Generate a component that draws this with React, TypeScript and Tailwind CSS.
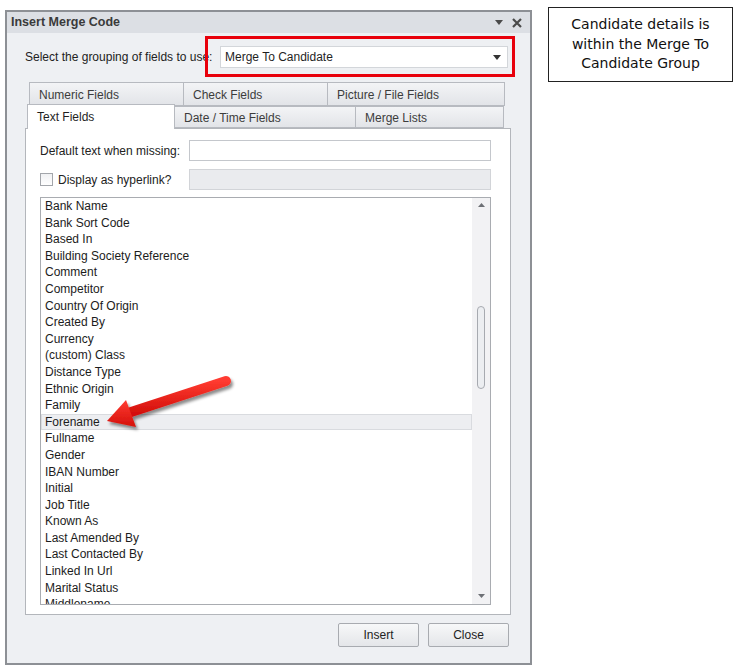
import React from 'react';

const fields = [
  'Bank Name',
  'Bank Sort Code',
  'Based In',
  'Building Society Reference',
  'Comment',
  'Competitor',
  'Country Of Origin',
  'Created By',
  'Currency',
  '(custom) Class',
  'Distance Type',
  'Ethnic Origin',
  'Family',
  'Forename',
  'Fullname',
  'Gender',
  'IBAN Number',
  'Initial',
  'Job Title',
  'Known As',
  'Last Amended By',
  'Last Contacted By',
  'Linked In Url',
  'Marital Status',
  'Middlename',
];

function Tab({ label, width, active }: { label: string; width: string; active?: boolean }) {
  return (
    <div
      className={`${width} shrink-0 flex items-center pl-[9px] border border-[#b7bac0] -ml-px first:ml-0 ${
        active
          ? 'bg-white border-b-0 h-[25px] -mb-px relative z-10 text-[#1f1f1f]'
          : 'h-full pt-[2px] bg-gradient-to-b from-[#f3f4f6] to-[#e2e4e8] text-[#3c3c3c]'
      }`}
    >
      {label}
    </div>
  );
}

function Dialog() {
  return (
    <div className="ml-[5px] mt-[10px] w-[527px] h-[655px] border-2 border-[#8d9095] bg-[#eef0f3] flex flex-col shrink-0">
      {/* title bar */}
      <div className="h-[21px] bg-[#dcdfe4] flex items-center pl-[4px] pr-[8px]">
        <span className="font-bold text-[12.5px] text-[#3a3a3a]">Insert Merge Code</span>
        <div className="ml-auto flex items-center gap-[9px]">
          <svg width="8" height="5" viewBox="0 0 8 5">
            <path d="M0 0 L8 0 L4 5 Z" fill="#4a4a4a" />
          </svg>
          <svg width="10" height="10" viewBox="0 0 10 10">
            <path d="M1 1 L9 9 M9 1 L1 9" stroke="#4a4a4a" strokeWidth="2.2" />
          </svg>
        </div>
      </div>

      {/* grouping combo */}
      <div className="mt-[13px] flex items-center pl-[18px]">
        <span className="w-[195px] text-[#222]">Select the grouping of fields to use:</span>
        <div className="relative w-[288px] h-[22px] bg-white border border-[#d3d6da] flex items-center pl-[4px] pr-[6px]">
          <span className="text-[#1f1f1f]">Merge To Candidate</span>
          <svg className="ml-auto" width="8" height="5" viewBox="0 0 8 5">
            <path d="M0 0 L8 0 L4 5 Z" fill="#333" />
          </svg>
          <div className="absolute -left-[16px] -top-[11px] w-[310px] h-[41px] border-[3px] border-[#e8000b] pointer-events-none" />
        </div>
      </div>

      {/* tabs */}
      <div className="mt-[14px] ml-[18px] w-[486px]">
        <div className="flex h-[24px] pl-[4px]">
          <Tab label="Numeric Fields" width="w-[155px]" />
          <Tab label="Check Fields" width="w-[145px]" />
          <Tab label="Picture / File Fields" width="w-[178px]" />
        </div>
        <div className="flex h-[22px] pl-[2px] items-end">
          <Tab label="Text Fields" width="w-[148px]" active />
          <Tab label="Date / Time Fields" width="w-[182px]" />
          <Tab label="Merge Lists" width="w-[149px]" />
        </div>

        {/* panel */}
        <div className="h-[487px] border border-[#b3b6bb] bg-white pt-[11px] pl-[14px]">
          <div className="flex items-center h-[21px]">
            <span className="w-[149px] text-[#222]">Default text when missing:</span>
            <div className="w-[302px] h-[21px] border border-[#c4c7cc] bg-white" />
          </div>
          <div className="flex items-center h-[21px] mt-[8px]">
            <div className="w-[149px] flex items-center">
              <div className="w-[13px] h-[13px] border border-[#a3a6ab] bg-gradient-to-b from-[#f0f1f3] to-white" />
              <span className="ml-[5px] text-[#222]">Display as hyperlink?</span>
            </div>
            <div className="w-[302px] h-[21px] border border-[#d2d4d8] bg-[#eaebee]" />
          </div>

          {/* list */}
          <div className="mt-[7px] w-[451px] h-[408px] border border-[#a9acb1] flex overflow-hidden">
            <div className="flex-1">
              {fields.map((f) => (
                <div
                  key={f}
                  className={`h-[16.6px] leading-[16.6px] pl-[4px] text-[#1c1c1c] whitespace-nowrap ${
                    f === 'Forename' ? 'bg-[#edeef1] outline outline-1 outline-[#d9dbdf] -outline-offset-1' : ''
                  }`}
                >
                  {f}
                </div>
              ))}
            </div>
            <div className="w-[18px] bg-[#f2f2f4] flex flex-col items-center">
              <svg className="mt-[5px]" width="7" height="4" viewBox="0 0 7 4">
                <path d="M0 4 L7 4 L3.5 0 Z" fill="#6d7075" />
              </svg>
              <div className="mt-[99px] w-[8px] h-[83px] rounded-full border border-[#a7aab0] bg-[#eceef1]" />
              <svg className="mt-auto mb-[6px]" width="7" height="4" viewBox="0 0 7 4">
                <path d="M0 0 L7 0 L3.5 4 Z" fill="#6d7075" />
              </svg>
            </div>
          </div>
        </div>
      </div>

      {/* buttons */}
      <div className="mt-[8px] flex justify-end gap-[9px] pr-[21px]">
        <button className="w-[81px] h-[24px] rounded-[2px] border border-[#a8abb0] bg-gradient-to-b from-[#f7f8f9] to-[#e4e6e9] text-[#222]">
          Insert
        </button>
        <button className="w-[81px] h-[24px] rounded-[2px] border border-[#a8abb0] bg-gradient-to-b from-[#f7f8f9] to-[#e4e6e9] text-[#222]">
          Close
        </button>
      </div>
    </div>
  );
}

function Arrow() {
  return (
    <svg className="absolute left-0 top-0 pointer-events-none" width="738" height="669" viewBox="0 0 738 669">
      <defs>
        <linearGradient id="arrowFill" x1="0" y1="0" x2="0" y2="1">
          <stop offset="0" stopColor="#ff3b30" />
          <stop offset="1" stopColor="#d4100b" />
        </linearGradient>
        <filter id="arrowShadow" x="-20%" y="-50%" width="140%" height="200%">
          <feDropShadow dx="2" dy="3" stdDeviation="1.5" floodColor="#000" floodOpacity="0.45" />
        </filter>
      </defs>
      <g filter="url(#arrowShadow)">
        <line x1="226" y1="381" x2="128" y2="413" stroke="url(#arrowFill)" strokeWidth="10" strokeLinecap="round" />
        <path d="M107 421 L126 400 L136 427 Z" fill="url(#arrowFill)" />
      </g>
    </svg>
  );
}

export default function App() {
  return (
    <div
      className="relative w-[738px] h-[669px] bg-white overflow-hidden text-[12px]"
      style={{ fontFamily: '"Liberation Sans", Arial, sans-serif' }}
    >
      <div className="flex items-start">
        <Dialog />
        <div
          className="ml-[16px] mt-[7px] w-[185px] h-[75px] border border-[#222] flex items-center justify-center text-center text-[14px] leading-[19.5px] text-[#111]"
          style={{ fontFamily: '"DejaVu Sans", sans-serif' }}
        >
          Candidate details is
          <br />
          within the Merge To
          <br />
          Candidate Group
        </div>
      </div>
      <Arrow />
    </div>
  );
}
